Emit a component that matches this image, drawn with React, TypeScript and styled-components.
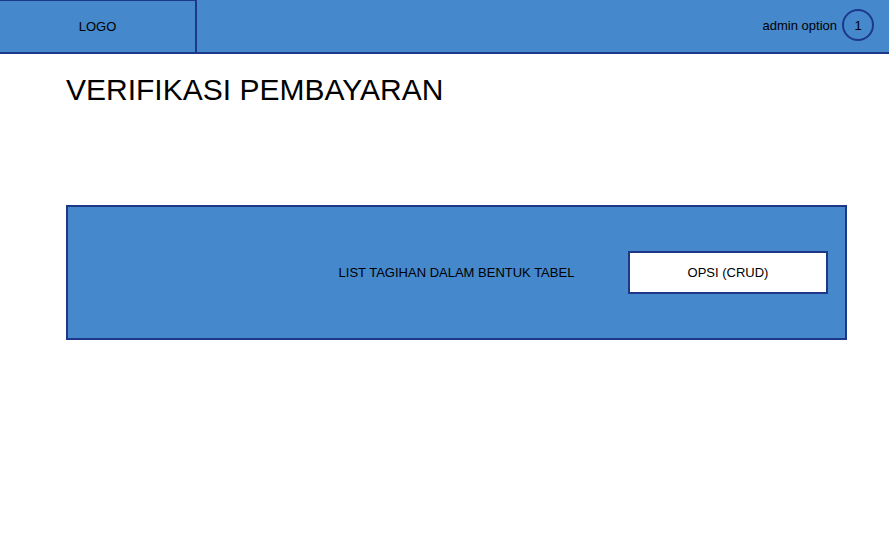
import React from 'react'
import styled, { createGlobalStyle } from 'styled-components'

const BLUE = '#4588cc'
const NAVY = '#1d3889'

const GlobalStyle = createGlobalStyle`
  html, body {
    margin: 0;
    padding: 0;
    background: #ffffff;
    font-family: 'Liberation Sans', Arial, sans-serif;
    color: #000000;
  }
`

const Header = styled.header`
  display: flex;
  align-items: stretch;
  height: 54px;
  box-sizing: border-box;
  background: ${BLUE};
  border-bottom: 2px solid ${NAVY};
`

const LogoBox = styled.div`
  width: 197px;
  box-sizing: border-box;
  border-top: 1px solid ${NAVY};
  border-right: 2px solid ${NAVY};
  display: flex;
  align-items: center;
  justify-content: center;
  font-size: 13px;
`

const HeaderRight = styled.div`
  flex: 1;
  display: flex;
  align-items: center;
  justify-content: flex-end;
  gap: 5px;
  padding-right: 15px;
  padding-bottom: 2px;
  font-size: 13px;
`

const Badge = styled.div`
  width: 32px;
  height: 32px;
  box-sizing: border-box;
  border: 2px solid ${NAVY};
  border-radius: 50%;
  display: flex;
  align-items: center;
  justify-content: center;
  font-size: 13px;
  line-height: 1;
`

const Main = styled.main`
  padding: 0 42px 0 66px;
`

const Title = styled.h1`
  margin: 18px 0 97px;
  font-size: 30px;
  font-weight: normal;
  line-height: 36px;
`

const Panel = styled.section`
  display: grid;
  grid-template-columns: 1fr auto 1fr;
  align-items: center;
  height: 135px;
  box-sizing: border-box;
  background: ${BLUE};
  border: 2px solid ${NAVY};
`

const PanelLabel = styled.div`
  grid-column: 2;
  font-size: 13px;
`

const ActionCell = styled.div`
  grid-column: 3;
  display: flex;
  justify-content: flex-end;
  padding-right: 17px;
`

const CrudButton = styled.div`
  width: 200px;
  height: 43px;
  box-sizing: border-box;
  background: #ffffff;
  border: 2px solid ${NAVY};
  display: flex;
  align-items: center;
  justify-content: center;
  font-size: 13px;
`

export default function App() {
  return (
    <>
      <GlobalStyle />
      <Header>
        <LogoBox>LOGO</LogoBox>
        <HeaderRight>
          admin option
          <Badge>1</Badge>
        </HeaderRight>
      </Header>
      <Main>
        <Title>VERIFIKASI PEMBAYARAN</Title>
        <Panel>
          <PanelLabel>LIST TAGIHAN DALAM BENTUK TABEL</PanelLabel>
          <ActionCell>
            <CrudButton>OPSI (CRUD)</CrudButton>
          </ActionCell>
        </Panel>
      </Main>
    </>
  )
}
